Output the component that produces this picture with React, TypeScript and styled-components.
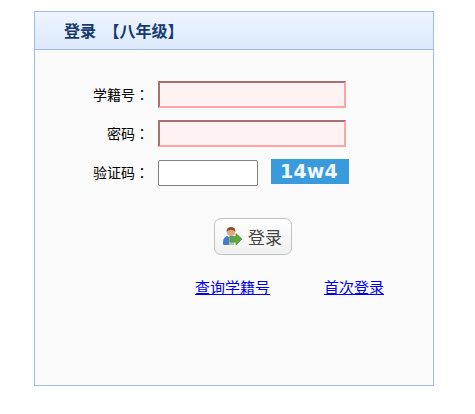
import React from 'react';
import styled, { createGlobalStyle } from 'styled-components';

const Global = createGlobalStyle`
  html,body{margin:0;padding:0;background:#fff;}
  body{font-family:"Liberation Sans","Noto Sans CJK SC",sans-serif;}
`;

const Page = styled.div`
  padding:11px 0 0 34px;
`;

const Panel = styled.div`
  box-sizing:border-box;width:400px;height:375px;
  border:1px solid #9dbcea;background:#fafafa;
`;

const Header = styled.div`
  box-sizing:border-box;height:38px;padding:0 0 2px 29px;
  display:flex;align-items:center;
  border-bottom:1px solid #9dbcea;
  background:linear-gradient(180deg,#eef5ff,#dce9fd);
  color:#153a6e;font-size:16px;font-weight:bold;word-spacing:3px;
`;

const Form = styled.form`
  display:flex;flex-direction:column;gap:12px;
  padding:31px 0 0 0;
`;

const Row = styled.div`
  display:flex;align-items:center;height:27px;
`;

const Label = styled.label`
  box-sizing:border-box;width:114px;margin:0 9px 2px 0;text-align:right;
  font-family:"Liberation Sans","Noto Sans CJK TC",sans-serif;
  font-size:14px;color:#000;white-space:nowrap;
`;

const TextInput = styled.input`
  box-sizing:border-box;width:188px;height:27px;margin:0;padding:1px 2px;
  background:#fff2f2;
  border-style:solid;border-width:2px;
  border-color:#a87070 #ffa3a3 #ffa3a3 #a87070;
`;

const CodeInput = styled.input`
  box-sizing:border-box;width:100px;height:26px;margin:0;padding:1px 2px;
  background:#fff;border:1px solid #808080;border-radius:2px;
`;

const Captcha = styled.div`
  box-sizing:border-box;width:78px;height:25px;margin:0 0 2px 13px;padding:0 2px 1px 0;
  display:flex;align-items:center;justify-content:center;
  background:#3a9bdc;color:#eef8ff;
  font-family:"DejaVu Sans",sans-serif;font-size:19px;font-weight:bold;letter-spacing:.2px;
`;

const ButtonRow = styled.div`
  display:flex;padding:20px 0 0 179px;
`;

const LoginButton = styled.button`
  box-sizing:border-box;width:78px;height:37px;padding:0 0 0 7px;
  display:flex;align-items:center;gap:5px;
  border:1px solid #c2c2c2;border-radius:7px;
  background:linear-gradient(180deg,#ffffff,#f0f0f0);
  color:#444;font-family:inherit;font-size:17px;
`;

const Links = styled.div`
  display:flex;gap:54px;padding:9px 0 0 160px;
`;

const Link = styled.a`
  color:#0000ee;font-size:15px;text-decoration:underline;white-space:nowrap;
`;

const UserIcon = () => (
  <svg width="21" height="21" viewBox="0 0 21 21">
    <circle cx="9" cy="6" r="4" fill="#e0a880" />
    <path d="M4.600 6C4.400 2.400 6.500 1 9 1s4.800 1.400 4.400 5C12 4.200 10 3.800 8.600 4 7 4.200 5.600 4.800 4.600 6z" fill="#8a5030" />
    <path d="M1 18c-.4-4 1.200-7.500 4.500-8l2 1.500V19H3c-1 0-1.900-.2-2-1z" fill="#3f7fd0" />
    <path d="M7 10h4l1 1v8H7z" fill="#a8c8a0" />
    <path d="M8 10.500h6V7.500l6 5.500-6 6v-3H8z" fill="#5fa83f" stroke="#3f8030" strokeWidth=".6" />
  </svg>
);

export default function App() {
  return (
    <Page>
      <Global />
      <Panel>
        <Header>登录 【八年级】</Header>
        <Form>
          <Row>
            <Label>学籍号：</Label>
            <TextInput type="text" />
          </Row>
          <Row>
            <Label>密码：</Label>
            <TextInput type="password" />
          </Row>
          <Row>
            <Label>验证码：</Label>
            <CodeInput type="text" />
            <Captcha>14w4</Captcha>
          </Row>
          <ButtonRow>
            <LoginButton type="button"><UserIcon />登录</LoginButton>
          </ButtonRow>
          <Links>
            <Link href="#">查询学籍号</Link>
            <Link href="#">首次登录</Link>
          </Links>
        </Form>
      </Panel>
    </Page>
  );
}
